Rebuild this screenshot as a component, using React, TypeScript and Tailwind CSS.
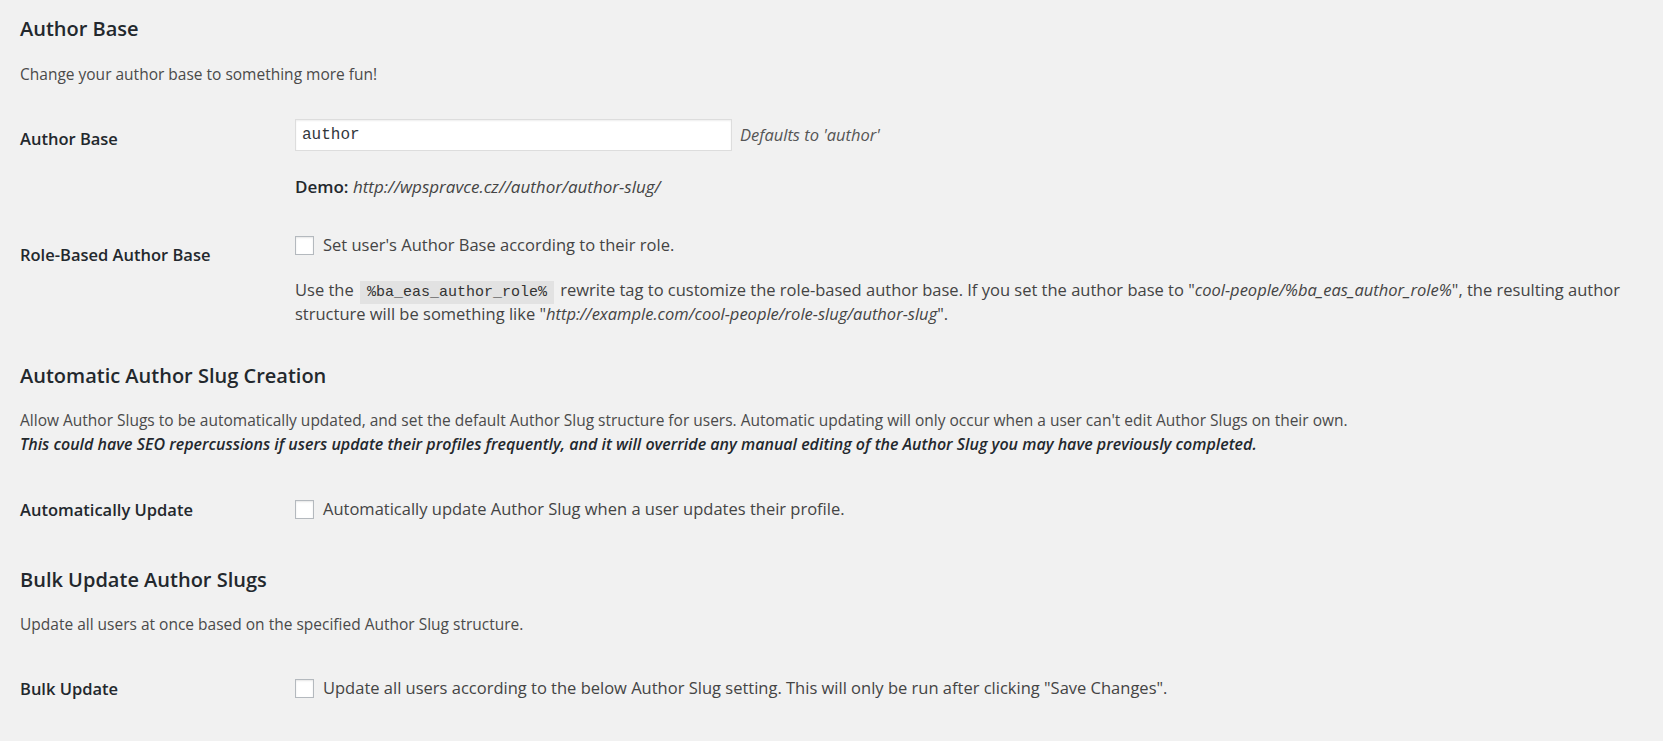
const body = "font-['Open_Sans','Noto_Sans',sans-serif]";

function Heading({ children, className = "" }: { children: React.ReactNode; className?: string }) {
  return (
    <h2 className={`text-[20px] leading-[30px] font-semibold text-[#23282d] ${className}`}>
      {children}
    </h2>
  );
}

function Checkbox() {
  return (
    <span className="inline-block w-[19px] h-[19px] shrink-0 bg-white border border-[#b4b9be] shadow-[inset_0_1px_2px_rgba(0,0,0,0.1)]" />
  );
}

function Code({ children }: { children: React.ReactNode }) {
  return (
    <code className="mx-[2px] px-[7px] py-[3px] leading-[16px] bg-[#e2e2e2] text-[15px] text-[#333] font-['Liberation_Mono',monospace]">
      {children}
    </code>
  );
}

const label = "w-[275px] shrink-0 text-[16.5px] leading-[24px] font-semibold text-[#23282d]";
const field = "text-[16.5px] leading-[24px] text-[#444]";
const desc = "text-[15.5px] leading-[24px] text-[#4a4a4a]";

export default function App() {
  return (
    <div className={`min-h-screen bg-[#f1f1f1] px-[20px] pt-[14px] pb-[40px] ${body}`}>
      {/* Author base */}
      <Heading>Author Base</Heading>
      <p className={`mt-[18px] ${desc}`}>Change your author base to something more fun!</p>

      <div className="mt-[33px] flex">
        <div className={`${label} pt-[8px]`}>Author Base</div>
        <div className="flex-1">
          <div className="flex items-center">
            <div className="w-[437px] h-[32px] bg-white border border-[#ddd] shadow-[inset_0_1px_2px_rgba(0,0,0,0.07)] flex items-center pl-[6px] text-[16px] text-[#32373c] font-['Liberation_Mono',monospace]">
              author
            </div>
            <span className="ml-[8px] text-[16.5px] italic text-[#555]">Defaults to 'author'</span>
          </div>
          <p className="mt-[24px] text-[17px] leading-[24px] text-[#444]">
            <span className="font-semibold text-[#23282d]">Demo:</span>{" "}
            <em>http://wpspravce.cz//author/author-slug/</em>
          </p>
        </div>
      </div>

      <div className="mt-[34px] flex">
        <div className={`${label} pt-[10px]`}>Role-Based Author Base</div>
        <div className="flex-1">
          <label className={`flex items-center gap-[9px] ${field}`}>
            <Checkbox />
            Set user's Author Base according to their role.
          </label>
          <p className={`mt-[21px] ${field}`}>
            Use the <Code>%ba_eas_author_role%</Code> rewrite tag to customize the role-based author
            base. If you set the author base to "<em>cool-people/%ba_eas_author_role%</em>", the
            resulting author structure will be something like "
            <em>http://example.com/cool-people/role-slug/author-slug</em>".
          </p>
        </div>
      </div>

      {/* Automatic slug creation */}
      <Heading className="mt-[35px]">Automatic Author Slug Creation</Heading>
      <p className={`mt-[17px] ${desc}`}>
        Allow Author Slugs to be automatically updated, and set the default Author Slug structure
        for users. Automatic updating will only occur when a user can't edit Author Slugs on their
        own.
        <br />
        <strong className="italic font-semibold text-[16px] text-[#23282d]">
          This could have SEO repercussions if users update their profiles frequently, and it will
          override any manual editing of the Author Slug you may have previously completed.
        </strong>
      </p>

      <div className="mt-[40px] flex">
        <div className={`${label} pt-[2px]`}>Automatically Update</div>
        <label className={`flex items-center gap-[9px] ${field}`}>
          <Checkbox />
          Automatically update Author Slug when a user updates their profile.
        </label>
      </div>

      {/* Bulk update */}
      <Heading className="mt-[43px]">Bulk Update Author Slugs</Heading>
      <p className={`mt-[17px] ${desc}`}>
        Update all users at once based on the specified Author Slug structure.
      </p>

      <div className="mt-[39px] flex">
        <div className={`${label} pt-[2px]`}>Bulk Update</div>
        <label className={`flex items-center gap-[9px] ${field}`}>
          <Checkbox />
          Update all users according to the below Author Slug setting. This will only be run after
          clicking "Save Changes".
        </label>
      </div>
    </div>
  );
}
